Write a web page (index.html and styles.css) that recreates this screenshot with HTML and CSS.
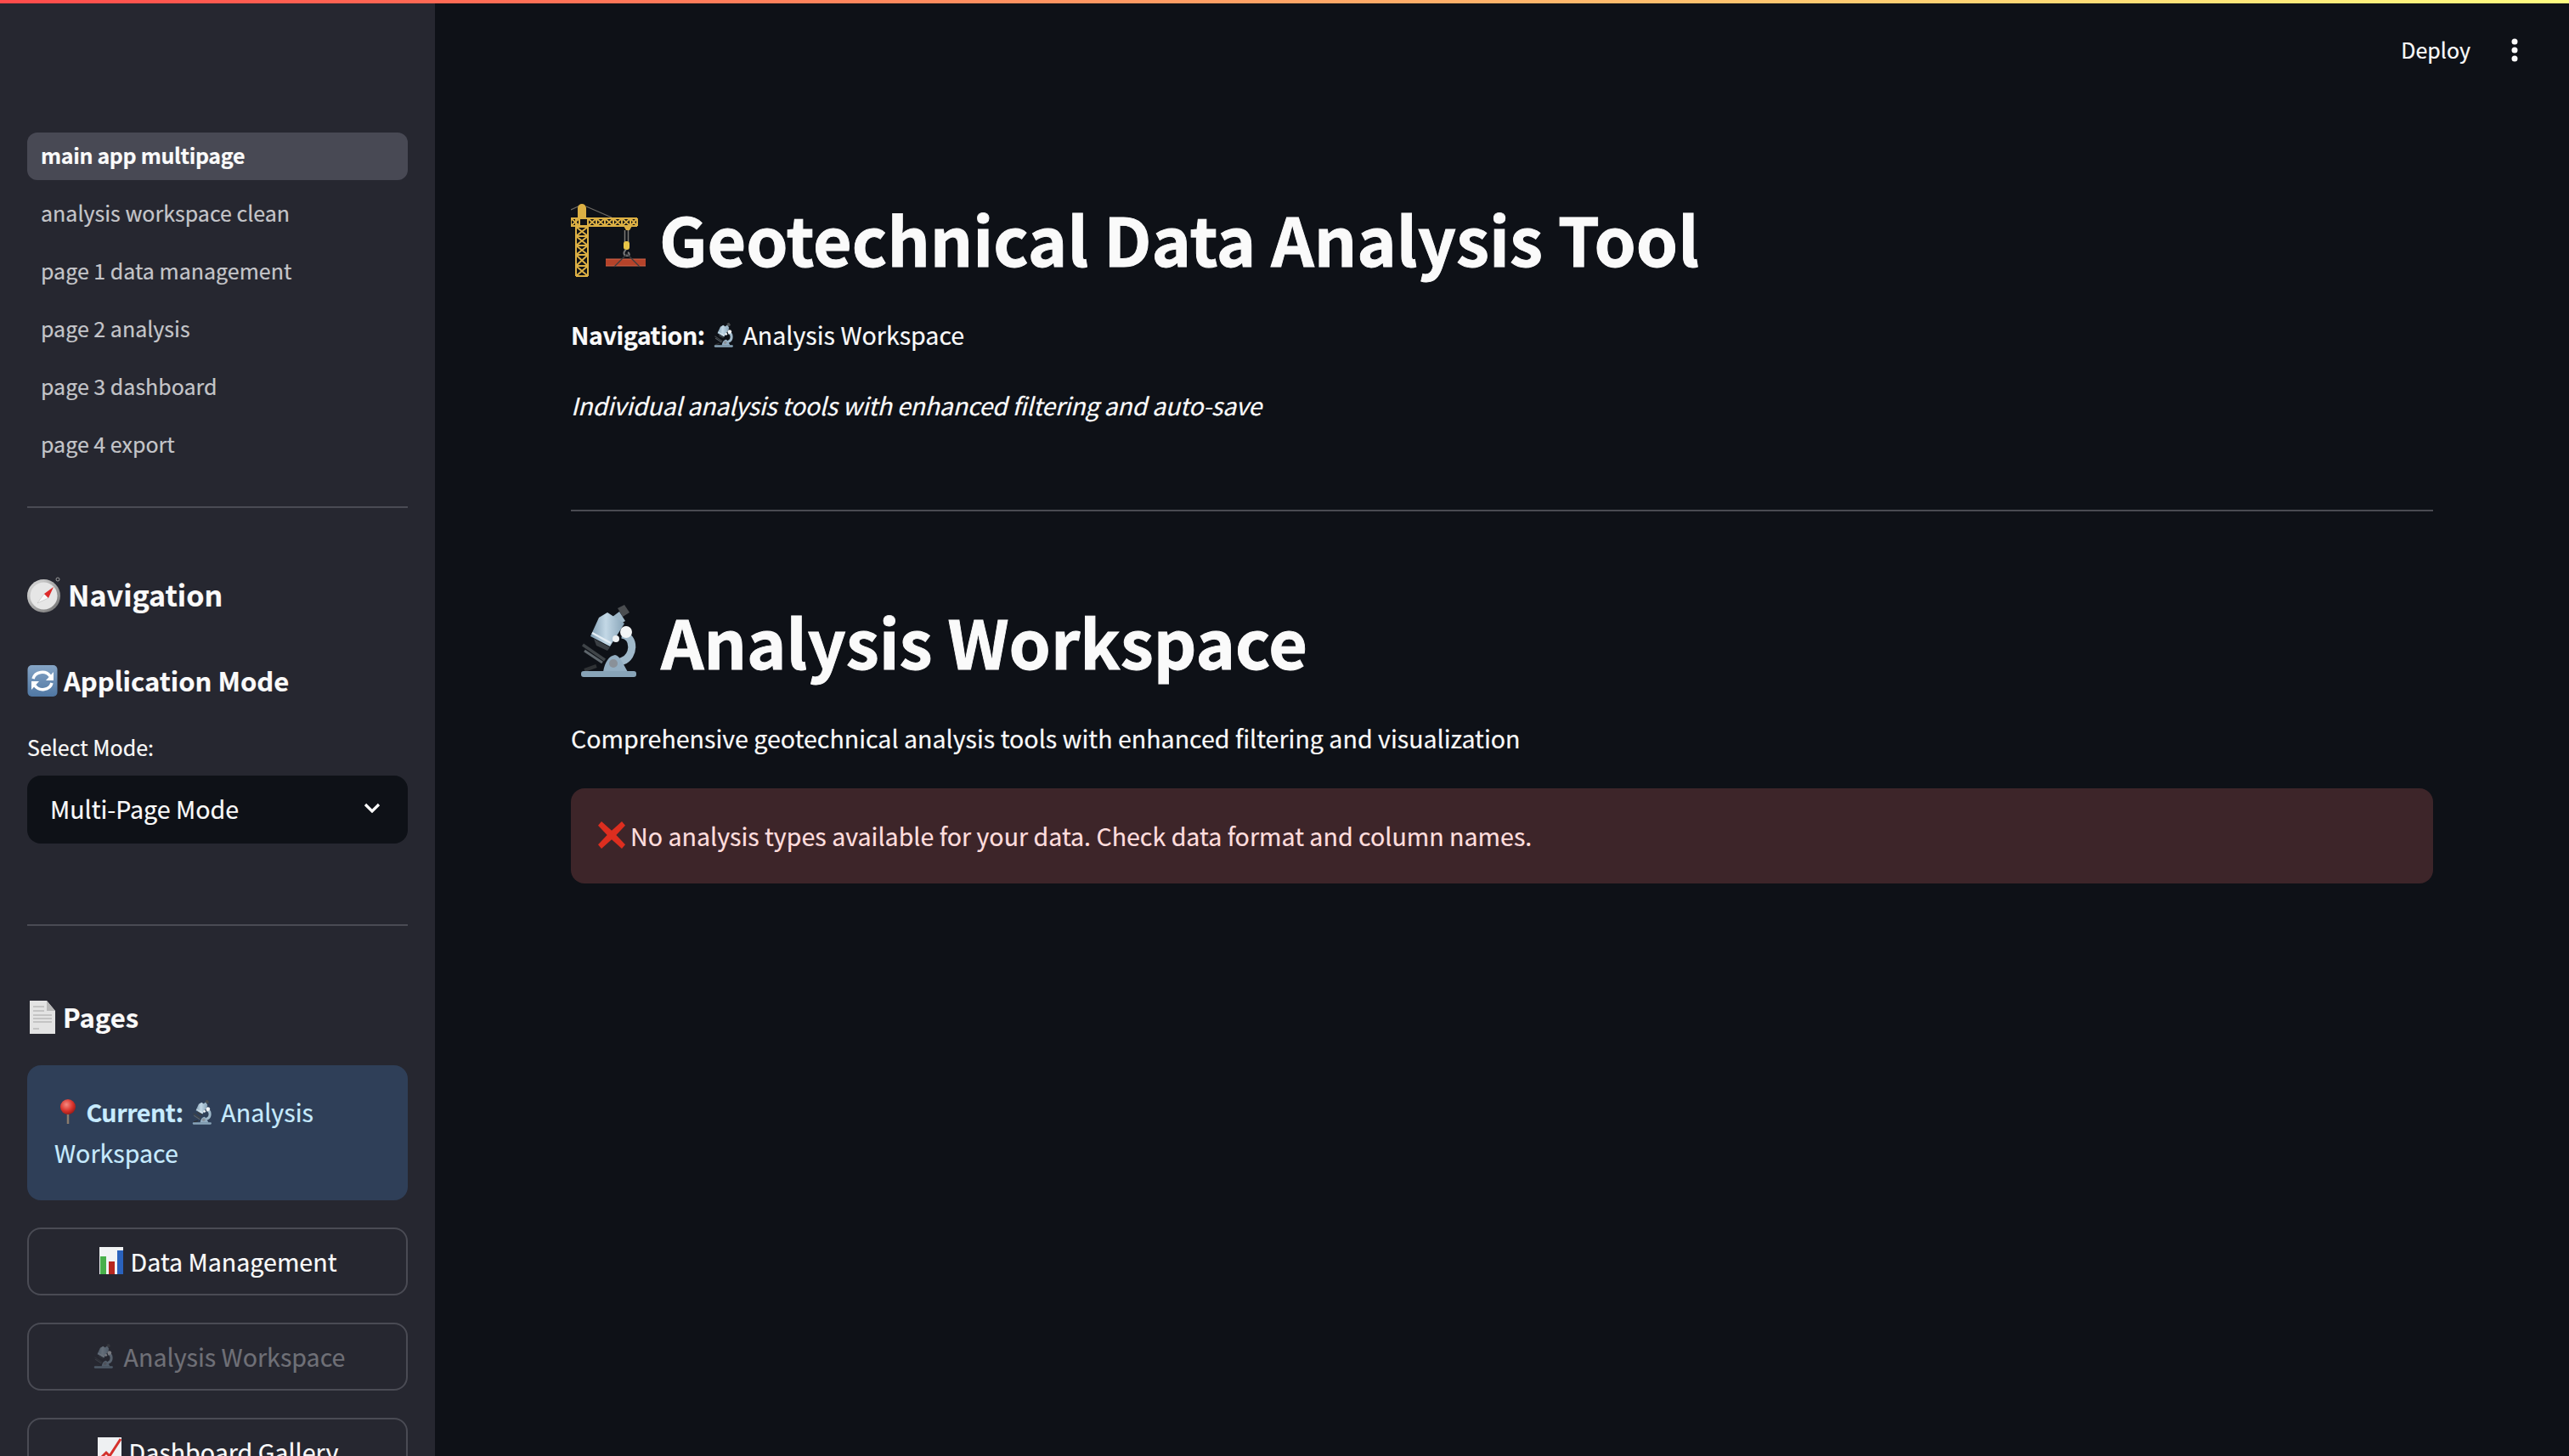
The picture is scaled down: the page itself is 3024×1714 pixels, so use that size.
FILE: index.html
```html
<!DOCTYPE html>
<html lang="en">
<head>
  <meta charset="utf-8">
  <title>Geotechnical Data Analysis Tool</title>
  <link rel="stylesheet" href="styles.css">
</head>
<body>
  <svg class="sprites" width="0" height="0">
    <defs>
      <linearGradient id="tube" x1="0" y1="0" x2="1" y2="0">
        <stop offset="0" stop-color="#7f9db2"/><stop offset=".45" stop-color="#c3d8e6"/><stop offset="1" stop-color="#86a3b7"/>
      </linearGradient>
      <linearGradient id="refresh" x1="0" y1="0" x2="0" y2="1">
        <stop offset="0" stop-color="#86a5c6"/><stop offset="1" stop-color="#4f77a3"/>
      </linearGradient>
      <linearGradient id="bezel" x1="0" y1="0" x2="1" y2="1">
        <stop offset="0" stop-color="#e4e4e4"/><stop offset="1" stop-color="#6d6d6d"/>
      </linearGradient>
      <radialGradient id="ball" cx=".4" cy=".35" r=".7">
        <stop offset="0" stop-color="#f58a80"/><stop offset=".6" stop-color="#d9322b"/><stop offset="1" stop-color="#8f1a16"/>
      </radialGradient>
      <symbol id="i-crane" viewBox="12 15 88 88">
        <path d="M12 22 25 16M30 18 60 31" stroke="#6d6a64" stroke-width="1.2" fill="none"/>
        <path d="M25 15a5 5 0 0 1 5 5v11h-10v-11a5 5 0 0 1 5-5z" fill="#dcb044"/>
        <g fill="none" stroke="#dcb044" stroke-width="2">
          <path d="M18 31V100M32 31V100M18 42H32M18 53H32M18 64H32M18 75H32M18 88H32M18 100H32"/>
          <path d="M18 42 32 53M32 42 18 53M18 53 32 64M32 53 18 64M18 64 32 75M32 64 18 75M18 75 32 88M32 75 18 88M18 88 32 100M32 88 18 100"/>
          <path d="M12 32H90M12 41H90M12 32V41M22 32V41M32 32V41M42 32V41M52 32V41M62 32V41M72 32V41M82 32V41M90 32V41"/>
          <path d="M32 32 42 41M42 32 32 41M42 32 52 41M52 32 42 41M52 32 62 41M62 32 52 41M62 32 72 41M72 32 62 41M72 32 82 41M82 32 72 41M82 32 90 41M90 32 82 41M12 32 22 41M22 32 12 41"/>
        </g>
        <path d="M74 41 H84 L81 46 H77z" fill="#dcb044"/>
        <path d="M75.500 46V60M79.500 46V60" stroke="#7c7a76" stroke-width="1.500"/>
        <rect x="74" y="59" width="7" height="10" rx="3" fill="#e8c547"/>
        <path d="M77 69c-4 3-3 7 1 7s3-3 1-4" stroke="#77787a" stroke-width="2" fill="none"/>
        <rect x="53" y="80" width="47" height="8" fill="#b5432a"/>
        <path d="M53 80H100M53 88H100" stroke="#d4674a" stroke-width="1.200"/>
        <path d="M78 74 63 89M78 74 93 89" stroke="#3d3d3f" stroke-width="1.300"/>
      </symbol>
      <symbol id="i-scope" viewBox="8 8 74 94">
        <path d="M55 17 63 13 69 22 61 27z" fill="#4a4d50"/>
        <path d="M49 27 57 21 64 32 56 37z" fill="#9db6c7"/>
        <path d="M60 48c16 2 15 26 1 31l-10 5" stroke="#a0b9ca" stroke-width="9" fill="none"/>
        <path d="M33 28 43 22 63 35 46 62 23 50z" fill="url(#tube)"/>
        <path d="M25 46 47 58" stroke="#e3edf4" stroke-width="2.500"/>
        <path d="M27 53 46 63 43 67 30 61z" fill="#3a3f44"/>
        <path d="M38 92c2-12 7-19 14-20 6 1 9 10 15 20z" fill="#93aec2"/>
        <circle cx="50" cy="82" r="5" fill="#8a9199"/>
        <path d="M14 60 40 78" stroke="#3f4448" stroke-width="3.500"/>
        <path d="M16 67 37 81" stroke="#5e666c" stroke-width="3"/>
        <path d="M16 90 30 85" stroke="#2f3235" stroke-width="4"/>
        <rect x="12" y="91" width="65" height="7" rx="3" fill="#88a4b8"/>
        <circle cx="65" cy="45" r="7" fill="#f4f6f7"/>
        <circle cx="53" cy="53" r="4" fill="#eef1f3"/>
      </symbol>
      <symbol id="i-compass" viewBox="0 0 40 42">
        <circle cx="36" cy="3" r="2" fill="none" stroke="#9a9a9a" stroke-width="1"/>
        <circle cx="19.500" cy="22.500" r="19.500" fill="url(#bezel)"/>
        <circle cx="19.500" cy="22.500" r="16" fill="#e6e6e6"/>
        <path d="M12 31 20 20 25 25z" fill="#f8f8f8" stroke="#b5b5b5" stroke-width=".5"/>
        <path d="M20 20 31 12 25 25z" fill="#de2b2b"/>
      </symbol>
      <symbol id="i-refresh" viewBox="0 0 36 37">
        <rect x=".5" width="35" height="37" rx="5" fill="url(#refresh)"/>
        <path d="M7 16a11 10 0 0 1 20-3" fill="none" stroke="#fff" stroke-width="3.500"/>
        <path d="M31 8v10h-9z" fill="#fff"/>
        <path d="M29 21a11 10 0 0 1-20 3" fill="none" stroke="#fff" stroke-width="3.500"/>
        <path d="M5 29v-10h9z" fill="#fff"/>
      </symbol>
      <symbol id="i-page" viewBox="0 0 30 39">
        <path d="M0 0H20L30 12V39H0z" fill="#e3e3e3"/>
        <path d="M20 0 30 12H20z" fill="#b9b9b9"/>
        <path d="M4 7H17M4 12H17M4 17H26M4 21H26M4 25H26M4 33H11" stroke="#a6a6a6" stroke-width="1.200"/>
      </symbol>
      <symbol id="i-pin" viewBox="0 0 24 30">
        <path d="M12 12V29" stroke="#8b7b6c" stroke-width="2.500"/>
        <circle cx="12" cy="9" r="9" fill="url(#ball)"/>
      </symbol>
      <symbol id="i-bars" viewBox="0 0 28 32">
        <rect width="28" height="32" fill="#f1f3f5"/>
        <rect x="1" y="11" width="7" height="21" fill="#48b04a"/>
        <rect x="11" y="17" width="7" height="15" fill="#b7271f"/>
        <rect x="21" y="4" width="7" height="28" fill="#2a62bd"/>
      </symbol>
      <symbol id="i-chart" viewBox="0 0 28 32">
        <rect width="28" height="32" fill="#eef0f2"/>
        <path d="M2 26 10 18 14 22 27 2" fill="none" stroke="#d4302b" stroke-width="3"/>
      </symbol>
      <symbol id="i-cross" viewBox="0 0 24 24">
        <path d="M3 0 12 8 21 0 24 3.500 16 12 24 20.500 21 24 12 16 3 24 0 20.500 8 12 0 3.500z" fill="#dd2e1f"/>
      </symbol>
    </defs>
  </svg>

  <div class="top-line"></div>
  <div class="app">
    <aside class="sidebar">
      <nav class="page-nav">
        <a class="page-link active">main app multipage</a>
        <a class="page-link">analysis workspace clean</a>
        <a class="page-link">page 1 data management</a>
        <a class="page-link">page 2 analysis</a>
        <a class="page-link">page 3 dashboard</a>
        <a class="page-link">page 4 export</a>
      </nav>
      <div class="side-rule first"></div>
      <h2 class="side-title nav-title"><svg class="ic ic-compass"><use href="#i-compass"/></svg>Navigation</h2>
      <h3 class="side-sub mode-title"><svg class="ic ic-refresh"><use href="#i-refresh"/></svg>Application Mode</h3>
      <label class="field-label">Select Mode:</label>
      <div class="select-box">
        <span>Multi-Page Mode</span>
        <svg class="chevron" viewBox="0 0 20 12"><path d="M2 2 10 10 18 2" fill="none" stroke="#fafafa" stroke-width="3.200"/></svg>
      </div>
      <div class="side-rule second"></div>
      <h3 class="side-sub pages-title"><svg class="ic ic-page"><use href="#i-page"/></svg>Pages</h3>
      <div class="current-box">
        <svg class="ic ic-pin"><use href="#i-pin"/></svg> <b>Current:</b> <svg class="ic ic-tiny"><use href="#i-scope"/></svg> Analysis Workspace
      </div>
      <button class="page-btn"><svg class="ic ic-bars"><use href="#i-bars"/></svg>Data Management</button>
      <button class="page-btn disabled"><svg class="ic ic-tiny"><use href="#i-scope"/></svg>Analysis Workspace</button>
      <button class="page-btn"><svg class="ic ic-bars"><use href="#i-chart"/></svg>Dashboard Gallery</button>
    </aside>

    <main class="main">
      <header class="toolbar">
        <span class="deploy">Deploy</span>
        <svg class="dots" viewBox="0 0 8 28"><circle cx="4" cy="4" r="3.500"/><circle cx="4" cy="14" r="3.500"/><circle cx="4" cy="24" r="3.500"/></svg>
      </header>
      <section class="content">
        <h1 class="title"><svg class="ic ic-crane"><use href="#i-crane"/></svg>Geotechnical Data Analysis Tool</h1>
        <p class="line nav-line"><b>Navigation:</b> <svg class="ic ic-tiny"><use href="#i-scope"/></svg> Analysis Workspace</p>
        <p class="line intro"><em>Individual analysis tools with enhanced filtering and auto-save</em></p>
        <hr class="rule">
        <h2 class="subtitle"><svg class="ic ic-scope"><use href="#i-scope"/></svg>Analysis Workspace</h2>
        <p class="line desc">Comprehensive geotechnical analysis tools with enhanced filtering and visualization</p>
        <div class="alert"><svg class="ic ic-cross"><use href="#i-cross"/></svg>No analysis types available for your data. Check data format and column names.</div>
      </section>
    </main>
  </div>
</body>
</html>
```

FILE: styles.css
```css
* {
  box-sizing: border-box;
}
html, body {
  margin: 0;
  height: 100%;
  overflow: hidden;
}
body {
  display: flex;
  flex-direction: column;
  background: #0e1117;
  color: #fafafa;
  font-family: "Noto Sans CJK SC", "Noto Sans", sans-serif;
  font-size: 28.6px;
  -webkit-text-stroke: .2px currentColor;
}
b {
  letter-spacing: -.45px;
}
.sprites {
  display: block;
}
.top-line {
  height: 4px;
  flex: none;
  background: linear-gradient(90deg, #ff4b4b, #fffd80);
}
.app {
  flex: 1;
  display: flex;
  min-height: 0;
}
.ic {
  flex: none;
}

/* sidebar */
.sidebar {
  width: 512px;
  flex: none;
  background: #262730;
  padding: 152px 32px 0;
  overflow: hidden;
}
.page-nav {
  display: flex;
  flex-direction: column;
  gap: 12px;
}
.page-link {
  height: 56px;
  line-height: 52px;
  padding-left: 16px;
  border-radius: 12px;
  font-size: 25px;
  color: #c4c5c9;
}
.page-link.active {
  background: #484954;
  color: #fafafa;
  font-weight: 700;
  letter-spacing: -.35px;
}
.side-rule {
  height: 2px;
  background: #4a4b54;
}
.side-rule.first {
  margin-top: 44px;
}
.side-rule.second {
  margin-top: 95px;
}
.side-title, .side-sub {
  display: flex;
  align-items: center;
  margin: 0;
  font-weight: 700;
  line-height: 50px;
}
.side-title {
  font-size: 34px;
  gap: 8px;
}
.side-sub {
  font-size: 31px;
  gap: 7px;
}
.nav-title {
  margin-top: 77px;
}
.mode-title {
  margin-top: 51px;
}
.pages-title {
  margin-top: 82px;
  gap: 9px;
}
.ic-compass { width: 40px; height: 42px; }
.ic-refresh { width: 36px; height: 37px; }
.ic-page { width: 30px; height: 39px; margin-left: 3px; }
.field-label {
  display: block;
  margin-top: 33px;
  font-size: 25px;
  line-height: 40px;
}
.select-box {
  height: 80px;
  margin-top: 14px;
  padding: 0 32px 4px 27px;
  display: flex;
  align-items: center;
  justify-content: space-between;
  background: #0e1117;
  border-radius: 16px;
}
.chevron {
  width: 20px;
  height: 12px;
}
.current-box {
  margin-top: 32px;
  padding: 31px 32px 32px;
  background: #2f3f58;
  border-radius: 16px;
  color: #c7ebff;
  line-height: 48px;
}
.ic-pin {
  width: 24px;
  height: 30px;
  margin: 0 3px 0 4px;
  vertical-align: -3px;
}
.ic-tiny {
  width: 26px;
  height: 32px;
  margin: 0 3px;
  vertical-align: -4px;
}
.page-btn {
  display: flex;
  align-items: center;
  justify-content: center;
  gap: 8px;
  width: 100%;
  height: 80px;
  margin-top: 32px;
  padding: 0 0 2px;
  background: transparent;
  border: 2px solid #4a4b54;
  border-radius: 16px;
  color: #fafafa;
  font: inherit;
}
.page-btn.disabled {
  color: #6f7077;
}
.page-btn.disabled .ic {
  opacity: .4;
}
.ic-bars {
  width: 30px;
  height: 32px;
}

/* main */
.main {
  flex: 1;
  min-width: 0;
}
.toolbar {
  height: 110px;
  padding-right: 60px;
  display: flex;
  align-items: center;
  justify-content: flex-end;
  gap: 48px;
}
.deploy {
  font-size: 25px;
  padding-bottom: 2px;
}
.dots {
  width: 8px;
  height: 28px;
  fill: #fafafa;
}
.content {
  padding: 122px 160px 0;
}
.title, .subtitle {
  display: flex;
  align-items: center;
  height: 88px;
  margin: 0;
  font-size: 78.8px;
  line-height: 88px;
  font-weight: 700;
  -webkit-text-stroke: .9px currentColor;
}
.title {
  gap: 16px;
}
.ic-crane {
  width: 88px;
  height: 88px;
  margin-top: 8px;
}
.subtitle {
  margin-top: 108px;
  gap: 24px;
}
.ic-scope {
  width: 74px;
  height: 94px;
  margin-left: 8px;
}
.line {
  margin: 0;
  line-height: 44px;
}
.nav-line {
  margin-top: 48px;
}
.intro {
  margin-top: 39px;
  letter-spacing: -.26px;
}
.rule {
  height: 2px;
  margin: 101px 0 0;
  border: 0;
  background: #4a4b52;
}
.desc {
  margin-top: 49px;
}
.alert {
  display: flex;
  align-items: center;
  gap: 6px;
  height: 112px;
  margin-top: 37px;
  padding: 0 32px 2px;
  background: #3d2529;
  border-radius: 16px;
  color: #ffdede;
}
.ic-cross {
  width: 32px;
  height: 32px;
}
```
